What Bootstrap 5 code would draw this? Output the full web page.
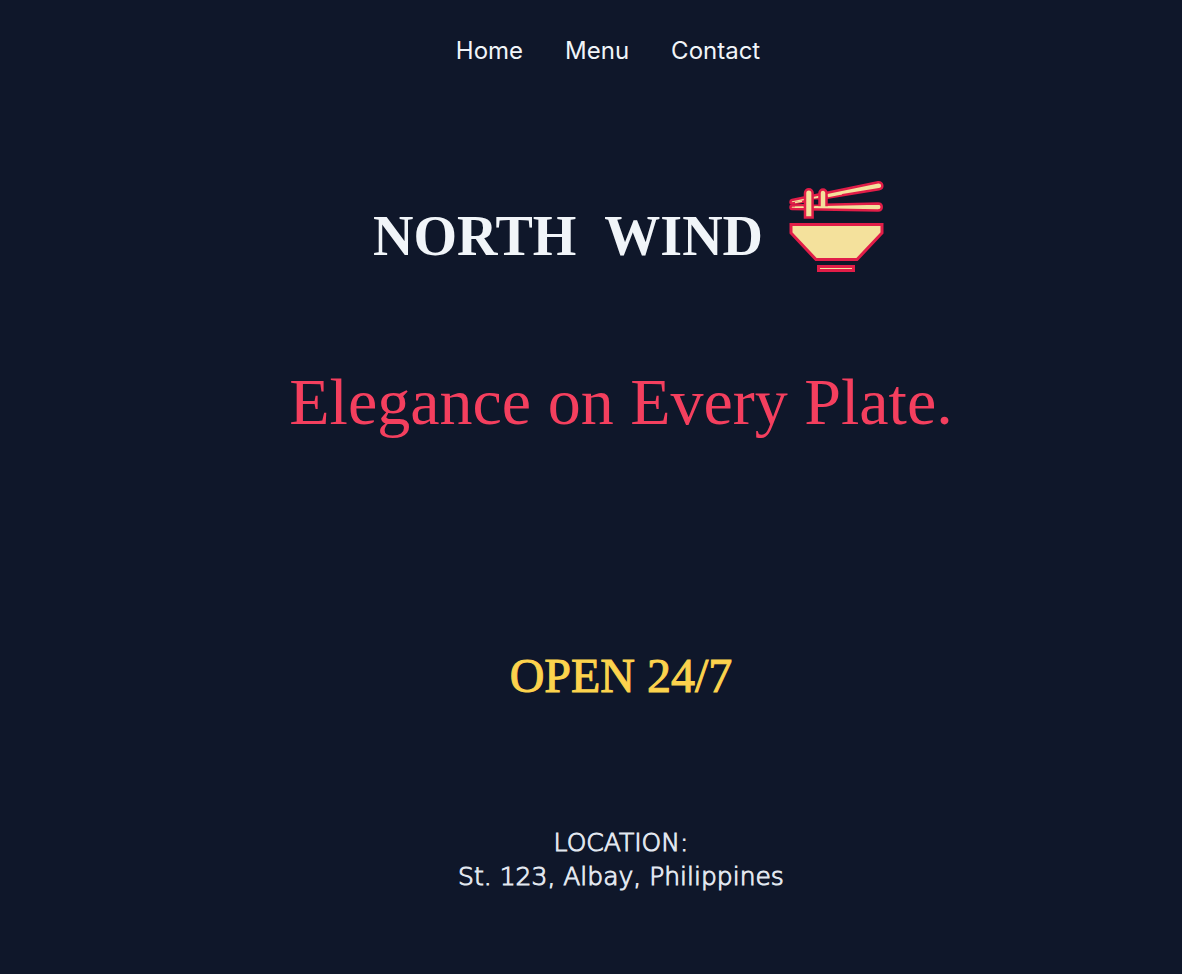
<!DOCTYPE html>
<html lang="en">
<head>
<meta charset="utf-8">
<meta name="viewport" content="width=device-width, initial-scale=1">
<title>North Wind</title>
<link rel="stylesheet" href="https://cdn.jsdelivr.net/npm/bootstrap@5.3.0/dist/css/bootstrap.min.css">
<style>
body { background: #0f172a; color: #f1f5f9; }
.site-nav { padding: 33px 0 0 34px; font-family: Inter, sans-serif; }
.site-nav ul { gap: 42px; }
.site-nav .nav-link { color: #f1f5f9; font-size: 24px; line-height: 36px; }
.site-main { padding-left: 60px; font-family: "Liberation Serif", serif; }
.brand { margin-top: 109px; gap: 24px; padding-left: 16px; }
.brand h1 { font-size: 56px; line-height: 64px; gap: 28px; padding-top: 26px; font-weight: 700; }
.bowl { width: 98px; height: 96px; }
.tagline { color: #f43f5e; font-size: 66px; line-height: 80px; margin-top: 88px; }
.hours { color: #fcd34d; font-size: 48px; line-height: 56px; margin-top: 206px; -webkit-text-stroke: 1px #fcd34d; }
.location { color: #e2e8f0; font-family: "DejaVu Sans", sans-serif; font-weight: 200; font-size: 25px; line-height: 34px; margin-top: 122px; -webkit-text-stroke: 1px #e2e8f0; }
</style>
</head>
<body>
<nav class="site-nav" aria-label="Main">
  <ul class="nav justify-content-center">
    <li class="nav-item"><a class="nav-link p-0" href="#home">Home</a></li>
    <li class="nav-item"><a class="nav-link p-0" href="#menu">Menu</a></li>
    <li class="nav-item"><a class="nav-link p-0" href="#contact">Contact</a></li>
  </ul>
</nav>
<main class="site-main text-center" id="home">
  <header class="brand d-flex justify-content-center align-items-start">
    <h1 class="d-flex mb-0"><span>NORTH</span> <span>WIND</span></h1>
    <svg class="bowl" viewBox="0 0 98 96" fill="#f4e19c" stroke="#e11d48" stroke-width="2.500" aria-hidden="true">
      <path d="M5 22 91 4.300C96 3.500 97 10.500 92 11.300L5 25.500C3 25.500 3 22.500 5 22Z"/>
      <path d="M5 27.500 91 25.500C96 25.500 96 32.500 91 32.500L5 31C3 31 3 27.500 5 27.500Z"/>
      <path fill="#0f172a" stroke="none" d="M26 21.500h6v5h-6z"/>
      <path d="M18 39.500V15a3.800 3.800 0 0 1 7.600 0v24.500Z"/>
      <path d="M32.500 29V15a3.500 3.500 0 0 1 7 0v14"/>
      <path fill="none" stroke-width="1.500" stroke="#f4e19c" d="M8 24.500 15 23.300M8 29.300h8M41 18.500l14-2.700M28 29h26"/>
      <path stroke-width="3" d="M4 46.500h91V55L70 81.500H29L4 55Z"/>
      <path stroke-width="3" d="M31.500 88.500h35v4h-35Z"/>
    </svg>
  </header>
  <p class="tagline mb-0">Elegance on Every Plate.</p>
  <p class="hours mb-0">OPEN 24/7</p>
  <address class="location mb-0" id="contact">LOCATION:<br>St. 123, Albay, Philippines</address>
</main>
<script src="https://cdn.jsdelivr.net/npm/bootstrap@5.3.0/dist/js/bootstrap.bundle.min.js"></script>
</body>
</html>
